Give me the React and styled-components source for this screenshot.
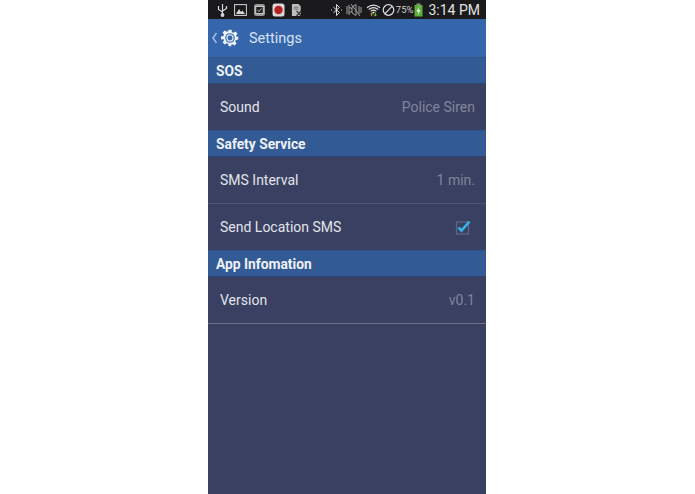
import React from "react";
import styled, { createGlobalStyle } from "styled-components";

const GlobalStyle = createGlobalStyle`
  html, body { margin: 0; padding: 0; background: #fff; }
  body { font-family: Roboto, "Liberation Sans", sans-serif; }
`;

const Page = styled.div`
  width: 695px;
  height: 494px;
  display: flex;
  justify-content: center;
  overflow: hidden;
`;

const Phone = styled.div`
  width: 278px;
  margin-right: 1px;
  display: flex;
  flex-direction: column;
  background: #394062;
`;

const StatusBar = styled.div`
  height: 19px;
  flex: none;
  background: #1a1a1c;
  display: flex;
  align-items: center;
  padding: 0 6px 0 9px;
  color: #e4e4e4;
`;

const StatusLeft = styled.div`
  display: flex;
  align-items: center;
  gap: 6px;
  flex: 1;
`;

const StatusRight = styled.div`
  display: flex;
  align-items: center;
`;

const Percent = styled.span`
  font-size: 9.5px;
  margin: 0 1px 0 0;
  color: #d0d0d0;
`;

const Clock = styled.span`
  font-size: 14px;
  margin-left: 5px;
  color: #e2e2e2;
`;

const ActionBar = styled.div`
  height: 38px;
  flex: none;
  background: #3566ab;
  display: flex;
  align-items: center;
  padding-left: 3px;
  box-sizing: border-box;
  color: #e6edf7;
`;

const Title = styled.span`
  font-size: 14.5px;
  margin-left: 10px;
  color: #d5e2f4;
`;

const SectionHeader = styled.div`
  height: 27px;
  box-sizing: border-box;
  flex: none;
  background: #325a94;
  border-top: 1px solid #2f5387;
  border-bottom: 1px solid #2c4672;
  display: flex;
  align-items: center;
  padding-left: 8px;
  font-size: 13.8px;
  font-weight: 700;
  color: #eef1f7;
`;

const Row = styled.div`
  height: ${(p) => p.$height}px;
  box-sizing: border-box;
  flex: none;
  display: flex;
  align-items: center;
  justify-content: space-between;
  padding: 0 11px 0 12px;
  border-bottom: ${(p) => (p.$line ? `1px solid ${p.$line}` : "none")};
`;

const Label = styled.span`
  font-size: 14px;
  color: #e2e4ea;
`;

const Value = styled.span`
  font-size: 14px;
  color: #81869a;
`;

const Check = styled.svg`
  width: 18px;
  height: 18px;
  margin-right: 3px;
`;

const StatusIcon = styled.svg`
  width: ${(p) => p.$w || 13}px;
  height: 14px;
  margin-right: ${(p) => p.$gap || 0}px;
  display: block;
`;

const UsbIcon = () => (
  <StatusIcon viewBox="0 0 11 14" $w={11} fill="none" stroke="#d8d8d8" strokeWidth="1.2">
    <path d="M5.5 1v12M1.5 3v3.5l4 2.5M9.5 3v2.5l-4 2.5" />
    <circle cx="5.5" cy="12" r="1.3" fill="#d8d8d8" />
  </StatusIcon>
);

const ImageIcon = () => (
  <StatusIcon viewBox="0 0 13 14" fill="none">
    <rect x="0.6" y="1.6" width="11.8" height="10.8" stroke="#d8d8d8" strokeWidth="1" />
    <path d="M2 11l3-5 2 3 1.5-1.5L11 11z" fill="#d8d8d8" />
  </StatusIcon>
);

const WatchIcon = () => (
  <StatusIcon viewBox="0 0 13 14" fill="none">
    <rect x="1" y="1" width="11" height="12" rx="2.5" fill="#9a9a9a" />
    <rect x="2.8" y="3.5" width="7.4" height="7" fill="#222" stroke="#e0e0e0" strokeWidth="0.8" />
    <path d="M4.5 7l1.5 1.5 2.5-3" stroke="#ddd" strokeWidth="0.8" />
  </StatusIcon>
);

const RecordIcon = () => (
  <StatusIcon viewBox="0 0 13 14" fill="none">
    <rect x="0.5" y="0.5" width="12" height="13" rx="2.5" fill="#d8d8d8" />
    <circle cx="6.5" cy="7" r="4.2" fill="#b8201d" />
  </StatusIcon>
);

const FileIcon = () => (
  <StatusIcon viewBox="0 0 13 14" $w={12} fill="none">
    <path d="M1 0.5h7l2.5 2.5v10.5H1z" fill="#bdbdbd" />
    <path d="M3 4h5M3 6h5" stroke="#555" strokeWidth="0.8" />
    <path d="M6 8l5 5.5M11 8l-5 5.5" stroke="#333" strokeWidth="1.4" />
  </StatusIcon>
);

const BluetoothIcon = () => (
  <StatusIcon viewBox="0 0 13 14" $gap={3} fill="none" stroke="#e0e0e0" strokeWidth="1">
    <path d="M3.5 4.2l6 5.3-3 3V1.5l3 2.9-6 5.3" />
    <path d="M1 7h1M11 7h1" />
  </StatusIcon>
);

const MuteIcon = () => (
  <StatusIcon viewBox="0 0 16 14" $w={16} $gap={4} fill="none" stroke="#a0a0a0" strokeWidth="1">
    <path d="M1 3v8M3 2v10M3 4l3 2M3 10l3-2" />
    <path d="M6 4v6l4 2.5V1.5zM5 1l9 12" />
    <path d="M13 3v8M15 4v6" />
  </StatusIcon>
);

const WifiIcon = () => (
  <StatusIcon viewBox="0 0 16 14" $w={15} $gap={1} fill="none">
    <path d="M1 4.5Q8-1 15 4.5M3 6.5Q8 2.5 13 6.5M5 8.5Q8 6 11 8.5" stroke="#e0e0e0" strokeWidth="1.3" />
    <path d="M6.5 9.5L8 8.5l1.5 1L8 11z" fill="#e0e0e0" />
    <path d="M6 13.5v-3M4.8 11.5L6 10l1.2 1.5" stroke="#c9a63c" strokeWidth="1" />
    <path d="M10 10v3.5M8.8 12L10 13.5 11.2 12" stroke="#8cc63f" strokeWidth="1" />
  </StatusIcon>
);

const BlockedIcon = () => (
  <StatusIcon viewBox="0 0 13 14" $gap={1} fill="none" stroke="#e0e0e0" strokeWidth="1.2">
    <circle cx="6.5" cy="7" r="5.3" />
    <path d="M2.8 10.8l7.4-7.6" />
  </StatusIcon>
);

const BatteryIcon = () => (
  <StatusIcon viewBox="0 0 9 14" $w={9} fill="none">
    <rect x="2.5" y="0.5" width="4" height="2" fill="#8a9a80" />
    <rect x="0.5" y="2" width="8" height="11.5" fill="#5cae3a" />
    <path d="M5.5 3L2.5 8.5h2L3.5 12.5l3-5.5h-2z" fill="#f2f5ea" />
  </StatusIcon>
);

const BackChevron = styled.svg`
  width: 7px;
  height: 12px;
`;

const Gear = styled.svg`
  width: 18px;
  height: 18px;
  margin-left: 3px;
`;

const SettingsGear = () => (
  <Gear viewBox="0 0 24 24" fill="none">
    <path
      d="M10 1h4l.6 3.2 1.9.8 2.7-1.8 2.8 2.8-1.8 2.7.8 1.9L23 10v4l-3.2.6-.8 1.9 1.8 2.7-2.8 2.8-2.7-1.8-1.9.8L13.8 23h-3.6l-.6-3.2-1.9-.8-2.7 1.8-2.8-2.8 1.8-2.7-.8-1.9L0 14v-4l3.2-.6.8-1.9L2.2 4.8 5 2l2.7 1.8 1.9-.8z"
      fill="#eef3fa"
    />
    <circle cx="12" cy="12" r="6.4" fill="#3566ab" />
    <circle cx="12" cy="12" r="4.1" fill="none" stroke="#dbe6f5" strokeWidth="1.6" />
  </Gear>
);

const App = () => (
  <>
    <GlobalStyle />
    <Page>
      <Phone>
        <StatusBar>
          <StatusLeft>
            <UsbIcon />
            <ImageIcon />
            <WatchIcon />
            <RecordIcon />
            <FileIcon />
          </StatusLeft>
          <StatusRight>
            <BluetoothIcon />
            <MuteIcon />
            <WifiIcon />
            <BlockedIcon />
            <Percent>75%</Percent>
            <BatteryIcon />
            <Clock>3:14 PM</Clock>
          </StatusRight>
        </StatusBar>
        <ActionBar>
          <BackChevron viewBox="0 0 7 12" fill="none" stroke="#a9c2e6" strokeWidth="1.4">
            <path d="M5.5 1L2 6l3.5 5" />
          </BackChevron>
          <SettingsGear />
          <Title>Settings</Title>
        </ActionBar>
        <SectionHeader>SOS</SectionHeader>
        <Row $height={46}>
          <Label>Sound</Label>
          <Value>Police Siren</Value>
        </Row>
        <SectionHeader>Safety Service</SectionHeader>
        <Row $height={47} $line="#4f5675">
          <Label>SMS Interval</Label>
          <Value>1 min.</Value>
        </Row>
        <Row $height={46}>
          <Label>Send Location SMS</Label>
          <Check viewBox="0 0 18 18" fill="none">
            <rect x="2.5" y="4" width="12" height="12" stroke="#5f6a8a" strokeWidth="1.2" />
            <path d="M4.5 9.5l3 3L15.5 3.5" stroke="#35b3e8" strokeWidth="2.6" />
          </Check>
        </Row>
        <SectionHeader>App Infomation</SectionHeader>
        <Row $height={47} $line="#6d7289">
          <Label>Version</Label>
          <Value>v0.1</Value>
        </Row>
      </Phone>
    </Page>
  </>
);

export default App;
